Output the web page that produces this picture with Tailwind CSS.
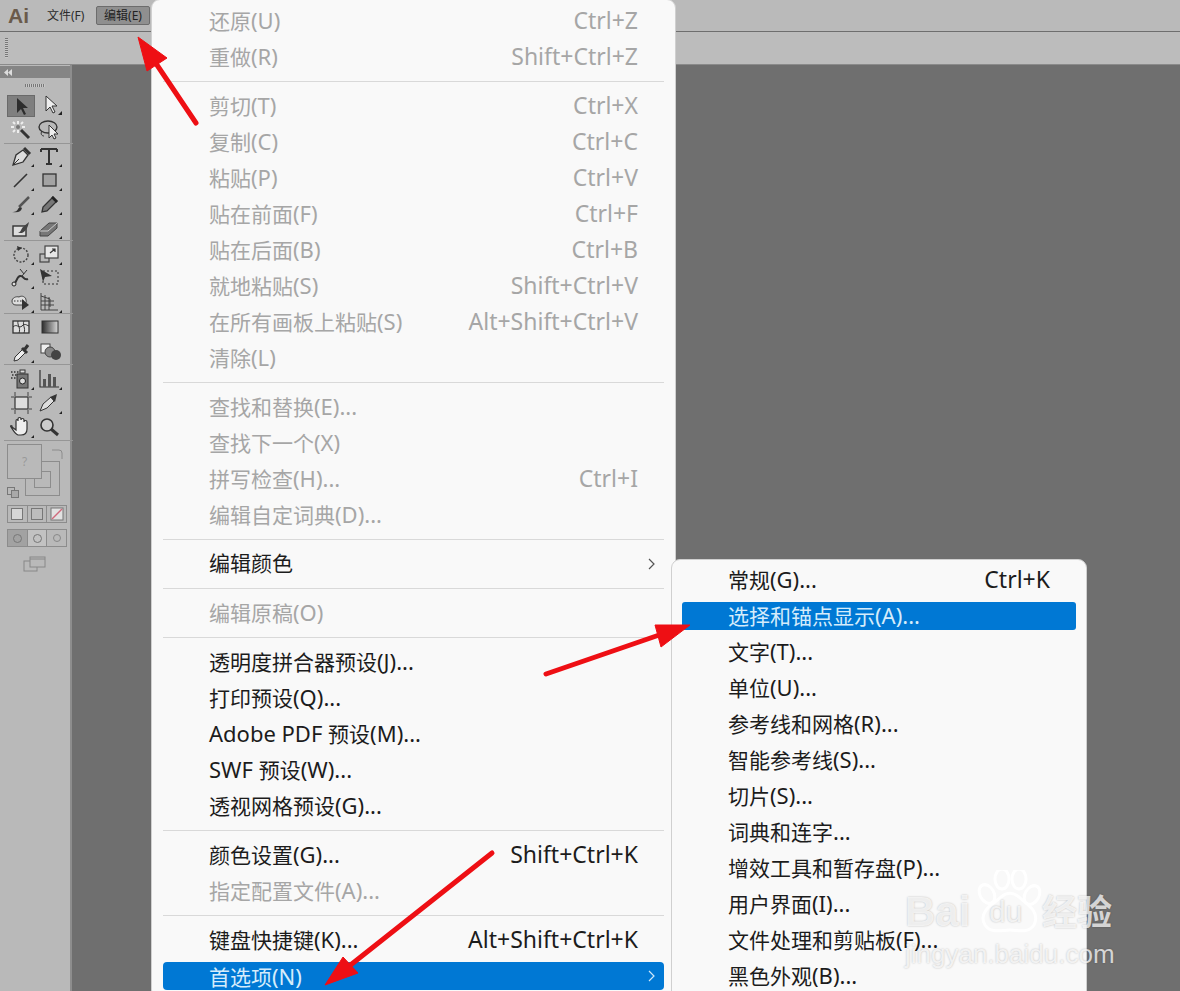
<!DOCTYPE html>
<html lang="zh-CN">
<head>
    <meta charset="UTF-8">
    <title>Illustrator 首选项菜单</title>
    <script src="https://cdn.jsdelivr.net/npm/@tailwindcss/browser@4"></script>
</head>
<body class="m-0 bg-[#6f6f6f]">
<div class="relative w-[1180px] h-[991px] overflow-hidden flex flex-col bg-[#6f6f6f] font-['Noto_Sans','Noto_Sans_CJK_SC',sans-serif]">

    <!-- Menu bar -->
    <header class="h-[31px] shrink-0 flex items-center bg-[#bababa] border-b border-[#6e6e6e] box-content">
        <span class="w-[47px] pl-[8px] text-[21px] font-bold leading-none text-[#6a5a4b] font-['Liberation_Sans',sans-serif]">Ai</span>
        <span class="w-[49px] text-[12px] text-[#2b2b2b]">文件(F)</span>
        <span class="w-[54px] h-[19px] flex items-center justify-center rounded-[2px] bg-[#8f8f8f] border border-[#6c6c6c] text-[12px] text-[#222]">编辑(E)</span>
    </header>

    <!-- Control bar -->
    <div class="h-[33px] shrink-0 flex items-center pl-[5px] bg-[#bcbcbc] border-b border-[#8a8a8a]">
        <div class="w-[3px] h-[20px] bg-[repeating-linear-gradient(#777_0,#777_1px,#c8c8c8_1px,#c8c8c8_2px)]"></div>
    </div>

    <div class="flex-1 flex min-h-0">
        <!-- Tools panel -->
        <aside class="w-[72px] shrink-0 flex flex-col bg-[#b9b9b9] border-r-2 border-[#8d8d8d]">
            <div class="h-[12px] mt-[1px] flex items-center pl-[4px] bg-[#858585]">
                <svg class="w-[8px] h-[7px]" viewBox="0 0 8 7"><path d="M4 0v7L0 3.500zM8 0v7L4 3.500z" fill="#ddd"/></svg>
            </div>
            <div class="h-[15px] flex items-center justify-center">
                <div class="w-[20px] h-[3px] bg-[repeating-linear-gradient(90deg,#777_0,#777_1px,#c8c8c8_1px,#c8c8c8_2px)]"></div>
            </div>

            <div class="pl-[7px] w-[70px]">
                <!-- selection group -->
                <div class="h-[51px] grid grid-cols-[28px_28px] auto-rows-[25px] border-b border-[#969696] -mr-[3px] -ml-[3px] pl-[3px]">
                    <div class="h-[22px] mt-[2px] bg-[#7f7f7f] border border-[#6a6a6a]">
                        <svg class="w-[26px] h-[20px]" viewBox="0 0 26 20"><path d="M9 2v15l4-4 3 6 2-1-3-6h5z" fill="#2d2d2d"/></svg>
                    </div>
                    <svg class="w-[28px] h-[24px]" viewBox="0 0 28 24"><path d="M11 3v15l4-4 3 6 2-1-3-6h5z" fill="#eee" stroke="#333"/><path d="M27 22h-4l4-4z" fill="#222"/></svg>
                    <svg class="w-[28px] h-[24px]" viewBox="0 0 28 24"><path d="M14 12l8 8" stroke="#333" stroke-width="3"/><path d="M11 3v3M11 12v3M4 9h3M15 9h3M6 4l2 2M16 4l-2 2M6 14l2-2" stroke="#eee" stroke-width="2"/><circle cx="11" cy="9" r="2" fill="#777"/></svg>
                    <svg class="w-[28px] h-[24px]" viewBox="0 0 28 24"><ellipse cx="13" cy="9" rx="9" ry="6" fill="none" stroke="#333" stroke-width="1.4"/><path d="M7 13c-2 3 0 5 2 5" fill="none" stroke="#333"/><path d="M14 7v13l3-3 2 4 2-1-2-4h4z" fill="#eee" stroke="#333"/></svg>
                </div>
                <!-- drawing group -->
                <div class="h-[97px] grid grid-cols-[28px_28px] auto-rows-[24px] border-b border-[#969696] -mr-[3px] -ml-[3px] pl-[3px]">
                    <svg class="w-[28px] h-[24px]" viewBox="0 0 28 24"><path d="M6 21l3-10 7-5 5 5-5 7z" fill="#ddd" stroke="#333" stroke-width="1.3"/><path d="M6 21l6-6" stroke="#333"/><path d="M17 4l6 6" stroke="#333" stroke-width="3"/><path d="M27 23h-3l3-3z" fill="#222"/></svg>
                    <svg class="w-[28px] h-[24px]" viewBox="0 0 28 24"><path d="M6 5h16M14 5v15M11 20h6M6 5v3M22 5v3" fill="none" stroke="#333" stroke-width="2"/><path d="M27 23h-3l3-3z" fill="#222"/></svg>
                    <svg class="w-[28px] h-[24px]" viewBox="0 0 28 24"><path d="M7 19L20 6" stroke="#333" stroke-width="1.6"/><path d="M27 23h-3l3-3z" fill="#222"/></svg>
                    <svg class="w-[28px] h-[24px]" viewBox="0 0 28 24"><rect x="8" y="6" width="13" height="12" fill="#a3a3a3" stroke="#333" stroke-width="1.3"/><path d="M27 23h-3l3-3z" fill="#222"/></svg>
                    <svg class="w-[28px] h-[24px]" viewBox="0 0 28 24"><path d="M12 15L22 5" stroke="#555" stroke-width="2.5"/><path d="M5 20c4 0 5-1 6-3 1-2 3-2 4-1-1 4-4 5-10 4z" fill="#333"/><path d="M27 23h-3l3-3z" fill="#222"/></svg>
                    <svg class="w-[28px] h-[24px]" viewBox="0 0 28 24"><path d="M7 20l1-5L18 5l4 4-10 10z" fill="#777" stroke="#333" stroke-width="1.3"/><path d="M17 5l5 5" stroke="#222" stroke-width="2.5"/><path d="M27 23h-3l3-3z" fill="#222"/></svg>
                    <svg class="w-[28px] h-[24px]" viewBox="0 0 28 24"><rect x="6" y="10" width="13" height="10" fill="#ddd" stroke="#333" stroke-width="1.4"/><path d="M11 17c3-1 3-4 5-6l6-5c-1 5-3 9-7 11z" fill="#444"/></svg>
                    <svg class="w-[28px] h-[24px]" viewBox="0 0 28 24"><path d="M5 15l9-8h8v5l-9 8H5z" fill="#777" stroke="#444"/><path d="M5 15h8l9-8" fill="none" stroke="#ccc"/><path d="M27 23h-3l3-3z" fill="#222"/></svg>
                </div>
                <!-- transform group -->
                <div class="h-[73px] grid grid-cols-[28px_28px] auto-rows-[24px] border-b border-[#969696] -mr-[3px] -ml-[3px] pl-[3px] pt-[1px]">
                    <svg class="w-[28px] h-[24px]" viewBox="0 0 28 24"><circle cx="14" cy="13" r="7" fill="none" stroke="#444" stroke-width="1.4" stroke-dasharray="2 1.5"/><path d="M10 4l5 2-4 3z" fill="#333"/><path d="M27 23h-3l3-3z" fill="#222"/></svg>
                    <svg class="w-[28px] h-[24px]" viewBox="0 0 28 24"><rect x="5" y="12" width="9" height="8" fill="none" stroke="#444" stroke-width="1.2"/><rect x="10" y="4" width="13" height="12" fill="#e6e6e6" stroke="#444" stroke-width="1.2"/><path d="M15 11l5-4M17 7h3v3" fill="none" stroke="#333" stroke-width="1.2"/><path d="M27 23h-3l3-3z" fill="#222"/></svg>
                    <svg class="w-[28px] h-[24px]" viewBox="0 0 28 24"><path d="M6 18c4 0 3-7 7-8 4-1 3 5 8 3" fill="none" stroke="#333" stroke-width="2"/><circle cx="7" cy="18" r="2" fill="#ddd" stroke="#222"/><path d="M13 3l4 5M20 4l-5 6" stroke="#333"/><path d="M27 23h-3l3-3z" fill="#222"/></svg>
                    <svg class="w-[28px] h-[24px]" viewBox="0 0 28 24"><rect x="8" y="5" width="15" height="13" fill="none" stroke="#333" stroke-dasharray="2 2"/><path d="M5 3l12 7-7 1-2 5z" fill="#333"/></svg>
                    <svg class="w-[28px] h-[24px]" viewBox="0 0 28 24"><path d="M5 11c0-3 4-5 7-4 3-2 7 0 7 3 1 2-1 5-4 5H9c-3 0-4-2-4-4z" fill="#ddd" stroke="#444"/><path d="M7 11h10" stroke="#333" stroke-dasharray="1.5 1.5"/><path d="M15 9v11l7-5z" fill="#333"/><path d="M27 23h-3l3-3z" fill="#222"/></svg>
                    <svg class="w-[28px] h-[24px]" viewBox="0 0 28 24"><path d="M6 3v17h17M6 6l9 3v8M10 5v15M14 7v13M6 11h13M6 15h13" fill="none" stroke="#444"/><path d="M27 23h-3l3-3z" fill="#222"/></svg>
                </div>
                <!-- mesh, gradient group -->
                <div class="h-[51px] grid grid-cols-[28px_28px] auto-rows-[25px] border-b border-[#969696] -mr-[3px] -ml-[3px] pl-[3px] pt-[1px]">
                    <svg class="w-[28px] h-[24px]" viewBox="0 0 28 24"><rect x="6" y="6" width="16" height="12" fill="#ddd" stroke="#333" stroke-width="1.3"/><path d="M6 12c4-4 6 2 9-1s4-1 7 0M11 6c-1 4 3 7 1 12M17 6c-2 4 2 7 0 12" fill="none" stroke="#333"/></svg>
                    <svg class="w-[28px] h-[24px]" viewBox="0 0 28 24"><defs><linearGradient id="grad"><stop offset="0" stop-color="#2c2c2c"/><stop offset="1" stop-color="#d8d8d8"/></linearGradient></defs><rect x="7" y="6" width="16" height="12" fill="url(#grad)" stroke="#333"/></svg>
                    <svg class="w-[28px] h-[24px]" viewBox="0 0 28 24"><path d="M7 21l1-4 8-8 3 3-8 8z" fill="#eee" stroke="#333"/><path d="M15 8l5 5M18 9l3-4" stroke="#333" stroke-width="3"/><path d="M27 23h-3l3-3z" fill="#222"/></svg>
                    <svg class="w-[28px] h-[24px]" viewBox="0 0 28 24"><rect x="6" y="4" width="9" height="9" fill="#eee" stroke="#444"/><circle cx="15" cy="12" r="5" fill="#888" stroke="#444"/><circle cx="21" cy="15" r="5" fill="#444"/></svg>
                </div>
                <!-- symbols, graph, artboard group -->
                <div class="h-[76px] grid grid-cols-[28px_28px] auto-rows-[24px] border-b border-[#969696] -mr-[3px] -ml-[3px] pl-[3px] pt-[2px]">
                    <svg class="w-[28px] h-[24px]" viewBox="0 0 28 24"><path d="M4 5h8M5 8h8M4 11h6" stroke="#333" stroke-width="1.5" stroke-dasharray="1.5 1.5"/><rect x="13" y="3" width="5" height="3" fill="#ddd" stroke="#333"/><rect x="10" y="7" width="11" height="14" fill="#777" stroke="#333"/><circle cx="15.500" cy="14" r="3" fill="#ddd" stroke="#222"/><path d="M27 23h-3l3-3z" fill="#222"/></svg>
                    <svg class="w-[28px] h-[24px]" viewBox="0 0 28 24"><path d="M5 3v17h19" fill="none" stroke="#333" stroke-width="1.2"/><path d="M8 12h3v8H8zM13 7h3v13h-3zM18 10h3v10h-3z" fill="#555"/><path d="M27 23h-3l3-3z" fill="#222"/></svg>
                    <svg class="w-[28px] h-[24px]" viewBox="0 0 28 24"><rect x="8" y="6" width="13" height="12" fill="#ddd" stroke="#333" stroke-width="1.2"/><path d="M4 6h3M22 6h3M4 18h3M22 18h3M8 1v4M21 1v4M8 19v4M21 19v4" stroke="#444"/></svg>
                    <svg class="w-[28px] h-[24px]" viewBox="0 0 28 24"><path d="M5 20l3-7 8-7 3 4-7 7z" fill="#ddd" stroke="#333"/><path d="M15 6l7-3-2 8z" fill="#333"/><path d="M27 23h-3l3-3z" fill="#222"/></svg>
                    <svg class="w-[28px] h-[24px]" viewBox="0 0 28 24"><path d="M5 12l4 3V6c0-2 2-2 2 0V4c0-2 3-2 3 0v1c0-2 3-2 3 0v2c0-2 3-2 3 0v7c0 4-2 6-6 6h-3c-3-1-5-5-7-8-1-1 0-2 1-1z" fill="#eee" stroke="#333" stroke-width="1.2"/><path d="M27 23h-3l3-3z" fill="#222"/></svg>
                    <svg class="w-[28px] h-[24px]" viewBox="0 0 28 24"><circle cx="12" cy="10" r="6" fill="#ccc" stroke="#333" stroke-width="1.6"/><path d="M16 14l7 6" stroke="#333" stroke-width="3"/></svg>
                </div>

                <!-- fill and stroke -->
                <div class="relative h-[60px] mt-[3px]">
                    <div class="absolute left-[18px] top-[17px] w-[35px] h-[35px] border border-[#8c8c8c]">
                        <div class="mx-auto mt-[9px] w-[17px] h-[17px] border border-[#8c8c8c]"></div>
                    </div>
                    <div class="absolute left-0 top-0 w-[35px] h-[35px] border border-[#8c8c8c] bg-[#b9b9b9] flex items-center justify-center text-[12px] text-[#999]">?</div>
                    <svg class="absolute left-[42px] top-[3px] w-[18px] h-[14px]" viewBox="0 0 18 14"><path d="M3 3h7a3 3 0 0 1 3 3v6" fill="none" stroke="#8c8c8c"/></svg>
                    <div class="absolute left-0 top-[43px] w-[8px] h-[8px] border border-[#777]"></div>
                    <div class="absolute left-[4px] top-[46px] w-[8px] h-[8px] border border-[#777] bg-[#a9a9a9]"></div>
                </div>
                <!-- color mode -->
                <div class="flex w-[60px] h-[18px] mt-[1px] border border-[#8c8c8c]">
                    <div class="flex-1 flex items-center justify-center border-r border-[#8c8c8c]"><div class="w-[12px] h-[12px] bg-[#d6d6d6] border border-[#777]"></div></div>
                    <div class="flex-1 flex items-center justify-center border-r border-[#8c8c8c]"><div class="w-[12px] h-[12px] bg-[#bdbdbd] border border-[#777]"></div></div>
                    <div class="flex-1 flex items-center justify-center"><svg class="w-[14px] h-[14px]" viewBox="0 0 14 14"><rect x="1" y="1" width="12" height="12" fill="#e2e2e2" stroke="#777"/><path d="M2 12L12 2" stroke="#d06a7c" stroke-width="1.500"/></svg></div>
                </div>
                <!-- draw mode -->
                <div class="flex w-[60px] h-[18px] mt-[6px] border border-[#8c8c8c]">
                    <div class="flex-1 flex items-center justify-center border-r border-[#8c8c8c] bg-[#a2a2a2]"><div class="w-[9px] h-[9px] rounded-full border border-[#777]"></div></div>
                    <div class="flex-1 flex items-center justify-center border-r border-[#8c8c8c] bg-[#c2c2c2]"><div class="w-[9px] h-[9px] rounded-full border border-[#777]"></div></div>
                    <div class="flex-1 flex items-center justify-center"><div class="w-[8px] h-[8px] rounded-full border border-[#888]"></div></div>
                </div>
                <!-- screen mode -->
                <svg class="w-[24px] h-[16px] mt-[9px] ml-[16px]" viewBox="0 0 24 16"><rect x="1" y="5" width="13" height="10" fill="none" stroke="#888"/><rect x="7" y="1" width="15" height="10" fill="#b9b9b9" stroke="#888"/><path d="M7 3h15" stroke="#888"/></svg>
            </div>
        </aside>
    </div>

    <!-- Edit menu -->
    <div data-menu class="absolute left-[151px] -top-px w-[525px] h-[1000px] pt-[3px] px-[11px] bg-[#f9f9f9] rounded-[9px] border border-[#d0d0d0] text-[21px] leading-[34px] text-[#a6a6a6]">
        <div class="flex justify-between h-[36px] pl-[46px] pr-[26px]"><span>还原(U)</span><span>Ctrl+Z</span></div>
        <div class="flex justify-between h-[36px] pl-[46px] pr-[26px]"><span>重做(R)</span><span>Shift+Ctrl+Z</span></div>
        <div class="h-[13px] flex items-center"><div class="w-full h-px bg-[#d9d9d9]"></div></div>
        <div class="flex justify-between h-[36px] pl-[46px] pr-[26px]"><span>剪切(T)</span><span>Ctrl+X</span></div>
        <div class="flex justify-between h-[36px] pl-[46px] pr-[26px]"><span>复制(C)</span><span>Ctrl+C</span></div>
        <div class="flex justify-between h-[36px] pl-[46px] pr-[26px]"><span>粘贴(P)</span><span>Ctrl+V</span></div>
        <div class="flex justify-between h-[36px] pl-[46px] pr-[26px]"><span>贴在前面(F)</span><span>Ctrl+F</span></div>
        <div class="flex justify-between h-[36px] pl-[46px] pr-[26px]"><span>贴在后面(B)</span><span>Ctrl+B</span></div>
        <div class="flex justify-between h-[36px] pl-[46px] pr-[26px]"><span>就地粘贴(S)</span><span>Shift+Ctrl+V</span></div>
        <div class="flex justify-between h-[36px] pl-[46px] pr-[26px]"><span>在所有画板上粘贴(S)</span><span>Alt+Shift+Ctrl+V</span></div>
        <div class="flex justify-between h-[36px] pl-[46px] pr-[26px]"><span>清除(L)</span></div>
        <div class="h-[13px] flex items-center"><div class="w-full h-px bg-[#d9d9d9]"></div></div>
        <div class="flex justify-between h-[36px] pl-[46px] pr-[26px]"><span>查找和替换(E)...</span></div>
        <div class="flex justify-between h-[36px] pl-[46px] pr-[26px]"><span>查找下一个(X)</span></div>
        <div class="flex justify-between h-[36px] pl-[46px] pr-[26px]"><span>拼写检查(H)...</span><span>Ctrl+I</span></div>
        <div class="flex justify-between h-[36px] pl-[46px] pr-[26px]"><span>编辑自定词典(D)...</span></div>
        <div class="h-[13px] flex items-center"><div class="w-full h-px bg-[#d9d9d9]"></div></div>
        <div class="flex justify-between h-[36px] pl-[46px] pr-[8px] text-[#1c1c1c]"><span>编辑颜色</span><svg class="w-[10px] h-[12px] mt-[12px]" viewBox="0 0 10 12"><path d="M3 1l5 5-5 5" fill="none" stroke="#555" stroke-width="1.2"/></svg></div>
        <div class="h-[13px] flex items-center"><div class="w-full h-px bg-[#d9d9d9]"></div></div>
        <div class="flex justify-between h-[36px] pl-[46px] pr-[26px]"><span>编辑原稿(O)</span></div>
        <div class="h-[13px] flex items-center"><div class="w-full h-px bg-[#d9d9d9]"></div></div>
        <div class="h-[36px] pl-[46px] text-[#1c1c1c]">透明度拼合器预设(J)...</div>
        <div class="h-[36px] pl-[46px] text-[#1c1c1c]">打印预设(Q)...</div>
        <div class="h-[36px] pl-[46px] text-[#1c1c1c]">Adobe PDF 预设(M)...</div>
        <div class="h-[36px] pl-[46px] text-[#1c1c1c]">SWF 预设(W)...</div>
        <div class="h-[36px] pl-[46px] text-[#1c1c1c]">透视网格预设(G)...</div>
        <div class="h-[13px] flex items-center"><div class="w-full h-px bg-[#d9d9d9]"></div></div>
        <div class="flex justify-between h-[36px] pl-[46px] pr-[26px] text-[#1c1c1c]"><span>颜色设置(G)...</span><span>Shift+Ctrl+K</span></div>
        <div class="h-[36px] pl-[46px]">指定配置文件(A)...</div>
        <div class="h-[13px] flex items-center"><div class="w-full h-px bg-[#d9d9d9]"></div></div>
        <div class="flex justify-between h-[36px] pl-[46px] pr-[26px] text-[#1c1c1c]"><span>键盘快捷键(K)...</span><span>Alt+Shift+Ctrl+K</span></div>
        <div class="flex justify-between items-center h-[28px] mt-[4px] pl-[46px] pr-[8px] rounded-[4px] bg-[#0078d4] text-[#d5ecfb] leading-[28px]"><span>首选项(N)</span><svg class="w-[10px] h-[12px]" viewBox="0 0 10 12"><path d="M3 1l5 5-5 5" fill="none" stroke="#cfe8fa" stroke-width="1.2"/></svg></div>
    </div>

    <!-- Preferences submenu -->
    <div data-menu class="absolute left-[671px] top-[559px] w-[416px] h-[450px] pt-[2px] px-[10px] bg-[#f9f9f9] rounded-[9px] border border-[#d0d0d0] text-[21px] leading-[34px] text-[#1c1c1c]">
        <div class="flex justify-between h-[36px] pl-[46px] pr-[26px]"><span>常规(G)...</span><span>Ctrl+K</span></div>
        <div class="h-[28px] my-[4px] pl-[46px] rounded-[3px] bg-[#0078d4] text-[#d5ecfb] leading-[26px]">选择和锚点显示(A)...</div>
        <div class="h-[36px] pl-[46px]">文字(T)...</div>
        <div class="h-[36px] pl-[46px]">单位(U)...</div>
        <div class="h-[36px] pl-[46px]">参考线和网格(R)...</div>
        <div class="h-[36px] pl-[46px]">智能参考线(S)...</div>
        <div class="h-[36px] pl-[46px]">切片(S)...</div>
        <div class="h-[36px] pl-[46px]">词典和连字...</div>
        <div class="h-[36px] pl-[46px]">增效工具和暂存盘(P)...</div>
        <div class="h-[36px] pl-[46px]">用户界面(I)...</div>
        <div class="h-[36px] pl-[46px]">文件处理和剪贴板(F)...</div>
        <div class="h-[36px] pl-[46px]">黑色外观(B)...</div>
    </div>

    <!-- Red annotation arrows -->
    <svg class="absolute left-0 top-0 w-[1180px] h-[991px] pointer-events-none" viewBox="0 0 1180 991">
        <g fill="#ee0f14" stroke="#ee0f14" stroke-linejoin="round">
            <path d="M196 123L155 62" stroke-width="5" stroke-linecap="round"/>
            <path d="M138 37L147 71L167 58Z" stroke-width="1"/>
            <path d="M546 674L665 633" stroke-width="5" stroke-linecap="round"/>
            <path d="M690 625L655 625L661 647Z" stroke-width="1"/>
            <path d="M492 853L348 967" stroke-width="5" stroke-linecap="round"/>
            <path d="M325 985L343 957L358 973Z" stroke-width="1"/>
        </g>
    </svg>

    <!-- Baidu watermark -->
    <div class="absolute left-[905px] top-[870px] w-[212px] h-[100px] pointer-events-none text-white/75 [text-shadow:0_0_2px_rgba(0,0,0,0.25)]">
        <svg class="absolute left-0 top-0 w-[212px] h-[70px]" viewBox="0 0 212 70">
            <g fill="none" stroke="#fff" stroke-width="3">
                <ellipse cx="82" cy="24" rx="7" ry="10" transform="rotate(-30 82 24)"/>
                <ellipse cx="97" cy="9" rx="7" ry="10"/>
                <ellipse cx="114" cy="9" rx="7" ry="10"/>
                <ellipse cx="127" cy="25" rx="7" ry="10" transform="rotate(30 127 25)"/>
                <path d="M80 55c-8-14 10-22 16-28 6-5 12-5 18 0 6 6 22 14 15 28-6 9-16 5-24 5s-19 4-25-5z"/>
            </g>
        </svg>
        <span class="absolute left-0 top-[19px] text-[42px] leading-[46px] font-bold font-['Liberation_Sans',sans-serif]">Bai</span>
        <span class="absolute left-[84px] top-[27px] text-[30px] leading-[30px] font-['Liberation_Sans',sans-serif]">du</span>
        <span class="absolute left-[137px] top-[22px] text-[35px] leading-[40px] font-bold">经验</span>
        <span class="absolute left-0 top-[68px] text-[26px] leading-[32px] font-['Liberation_Sans',sans-serif]">jingyan.baidu.com</span>
    </div>
</div>

<script>
    // Latin runs in the menus don't share the CJK size; shortcuts (pure ASCII) are a touch bigger still
    document.querySelectorAll('[data-menu]').forEach((menu) => {
        const walker = document.createTreeWalker(menu, NodeFilter.SHOW_TEXT);
        const nodes = [];
        while (walker.nextNode()) {
            if (walker.currentNode.textContent.trim()) nodes.push(walker.currentNode);
        }
        nodes.forEach((node) => {
            const text = node.textContent;
            if (/^[\x20-\x7e]+$/.test(text)) {
                node.parentElement.classList.add('text-[23px]');
                return;
            }
            const frag = document.createDocumentFragment();
            text.split(/([\x20-\x7e]+)/).forEach((part) => {
                if (!part) return;
                if (/[\x20-\x7e]/.test(part)) {
                    const span = document.createElement('span');
                    span.className = 'text-[22px]';
                    span.textContent = part;
                    frag.appendChild(span);
                } else {
                    frag.appendChild(document.createTextNode(part));
                }
            });
            node.replaceWith(frag);
        });
    });
</script>
</body>
</html>
